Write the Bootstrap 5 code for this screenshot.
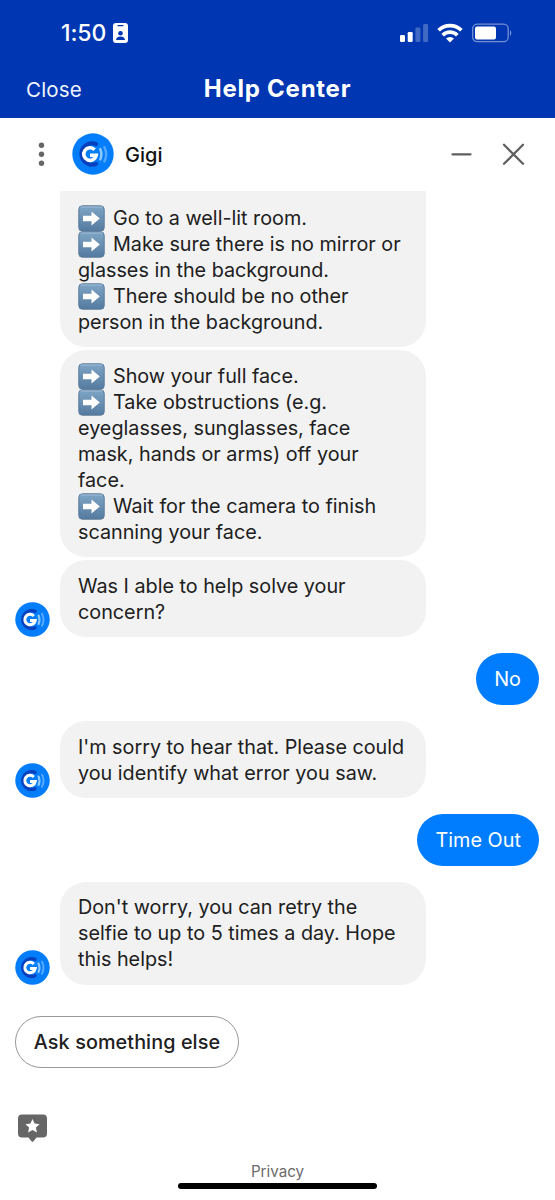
<!DOCTYPE html>
<html lang="en">
<head>
<meta charset="utf-8">
<meta name="viewport" content="width=device-width, initial-scale=1">
<title>Help Center</title>
<link rel="stylesheet" href="https://cdn.jsdelivr.net/npm/bootstrap@5.3.0/dist/css/bootstrap.min.css">
<style>
body{font-family:Inter,"Liberation Sans",sans-serif;color:#202020;background:#fff;font-size:19.78px;line-height:26px}
.screen{width:555px;height:1200px}
.top-bar{height:118px;background:#0036b1}
.status{height:66px;padding:0 42px 0 61px}
.clock{font-size:23px;font-weight:500;letter-spacing:-.1px}
.id-card{margin-left:7px}
.title-row{display:grid;grid-template-columns:1fr auto 1fr;padding:11px 26px 0}
.close-link{font-size:20.5px;letter-spacing:.2px;color:#f0f4ff}
.page-title{font-size:24px;font-weight:700;letter-spacing:.75px}
.bot-bar{height:73px;padding:0 30px 0 38px}
.bot-logo{margin:0 0 2px 26px}
.bot-name{font-size:20px;font-weight:500;color:#111;padding-left:3px}
.bot-row{padding-left:15px;gap:10px}
.messages{gap:3px}
.face{width:35px;height:35px;flex:none}
.bubble{width:366px;background:#f2f2f2;border-radius:26px;padding:12.75px 18px 12.25px}
.bubble.clipped{border-radius:0 0 26px 26px;padding-top:13.500px;height:156px}
.bubble span,.reply span{display:block;white-space:nowrap}
.arrow{width:27px;height:27px;margin:-1px 8px -1px 0;vertical-align:-6px}
.reply{background:#007dfe;height:52px;border-radius:26px;padding:0 18px;margin:16px 16px 15.750px 0;letter-spacing:.04px}
.quick{width:224px;height:52px;border:1px solid #999;border-radius:26px;margin:31px 0 0 15px;font-weight:500;color:#202020;background:#fff;letter-spacing:.1px}
.rate{margin:46px 0 0 18px}
.privacy{font-size:15.200px;line-height:20px;color:#6b6b6b;margin-top:19px}
.home-bar{width:199px;height:6px;border-radius:3px;background:#000;margin-top:1px}
</style>
<script src="https://cdn.jsdelivr.net/npm/bootstrap@5.3.0/dist/js/bootstrap.bundle.min.js"></script>
</head>
<body>
<svg width="0" height="0" class="position-absolute" aria-hidden="true">
<defs>
<linearGradient id="tile" x2="0" y2="1"><stop stop-color="#7fa5c6"/><stop offset="1" stop-color="#547a9f"/></linearGradient>
<symbol id="arrow" viewBox="0 0 27 27"><rect x=".8" y=".8" width="25.4" height="25.4" rx="3.5" fill="url(#tile)" stroke="#5c7a99"/><path d="M2.500 2h22" stroke="#a9c4da" stroke-width=".8"/><path d="M5 10.800h8.500V6.500l8.300 7-8.300 7v-4.300H5z" fill="#fff"/></symbol>
<symbol id="gigi" viewBox="0 0 42 42"><circle cx="21" cy="21" r="20.700" fill="#047dfb"/><path d="M24 11.200A10.600 10.600 0 1 0 24 30.800" fill="none" stroke="#0640be" stroke-width="4" stroke-linecap="round"/><path d="M22.600 16.700a6.300 6.300 0 1 0 1.600 5.600H18" fill="none" stroke="#fff" stroke-width="3.600"/><path d="M28.300 16.200q2.200 5.200 0 10.200" fill="none" stroke="#8cc6ff" stroke-width="2.600" stroke-linecap="round"/><path d="M32.400 14.200q3.600 7 0 14.200" fill="none" stroke="#55a8ff" stroke-width="2.500" stroke-linecap="round"/></symbol>
</defs></svg>
<main class="screen d-flex flex-column overflow-hidden">
<header class="top-bar text-white">
<div class="status d-flex align-items-center justify-content-between">
<div class="d-flex align-items-center"><span class="clock">1:50</span>
<svg class="id-card" width="15" height="20" viewBox="0 0 15 20"><rect width="15" height="20" rx="3" fill="#fff"/><path d="M5 2.600h5" stroke="#0036b1" stroke-width="1.400" stroke-linecap="round"/><circle cx="7.500" cy="10.300" r="2.300" fill="#0036b1"/><path d="M3 17c.3-2.500 2-3.500 4.500-3.500s4.200 1 4.500 3.500z" fill="#0036b1"/></svg></div>
<div class="d-flex align-items-center">
<svg width="29" height="20" viewBox="0 0 29 20"><g fill="#fff"><rect y="12" width="5" height="7" rx="1.300"/><rect x="7.700" y="9" width="5" height="10" rx="1.300"/><g opacity=".25"><rect x="15.400" y="4.500" width="5" height="14.500" rx="1.300"/><rect x="23.100" y="1" width="5" height="18" rx="1.300"/></g></g></svg>
<svg class="ms-2" width="26" height="20" viewBox="0 0 26 20"><g fill="none" stroke="#fff" stroke-width="3.700"><path d="M1.600 7.300a16.200 16.200 0 0 1 22.800 0"/><path d="M5.700 12.200a10.300 10.300 0 0 1 14.600 0"/></g><path d="M9 15.600a5.700 5.700 0 0 1 8 0l-4 4z" fill="#fff"/></svg>
<svg class="ms-2" width="42" height="20" viewBox="0 0 42 20"><rect x="1.700" y="1.200" width="35.500" height="17.500" rx="4.500" fill="none" stroke="#fff" stroke-opacity=".45" stroke-width="1.300"/><rect x="4" y="3.500" width="21" height="13" rx="2" fill="#fff"/><path d="M39 7q2.500 3 0 6z" fill="#fff" opacity=".5"/></svg>
</div></div>
<div class="title-row"><span class="close-link">Close</span><h1 class="page-title mb-0 lh-1">Help Center</h1></div>
</header>
<section class="bot-bar d-flex align-items-center">
<svg width="8" height="26" viewBox="0 0 8 26" fill="#666"><circle cx="3.500" cy="3.200" r="2.700"/><circle cx="3.500" cy="12.200" r="2.700"/><circle cx="3.500" cy="21.200" r="2.700"/></svg>
<svg class="bot-logo" width="42" height="42"><use href="#gigi"/></svg>
<span class="bot-name ms-2">Gigi</span>
<svg class="ms-auto" width="75" height="24" viewBox="0 0 75 24" fill="none" stroke="#606060" stroke-width="2.300" stroke-linecap="round"><path d="M2.500 11.300h18M54 1.800l19 19m0-19l-19 19"/></svg>
</section>
<section class="messages d-flex flex-column">
<div class="bot-row d-flex"><i class="face"></i><div class="bubble clipped"><span><svg class="arrow"><use href="#arrow"/></svg>Go to a well-lit room.</span><span><svg class="arrow"><use href="#arrow"/></svg>Make sure there is no mirror or</span><span>glasses in the background.</span><span><svg class="arrow"><use href="#arrow"/></svg>There should be no other</span><span>person in the background.</span></div></div>
<div class="bot-row d-flex"><i class="face"></i><div class="bubble"><span><svg class="arrow"><use href="#arrow"/></svg>Show your full face.</span><span><svg class="arrow"><use href="#arrow"/></svg>Take obstructions (e.g.</span><span>eyeglasses, sunglasses, face</span><span>mask, hands or arms) off your</span><span>face.</span><span><svg class="arrow"><use href="#arrow"/></svg>Wait for the camera to finish</span><span>scanning your face.</span></div></div>
<div class="bot-row d-flex align-items-end"><svg class="face"><use href="#gigi"/></svg><div class="bubble"><span>Was I able to help solve your</span><span>concern?</span></div></div>
</section>
<div class="reply text-white align-self-end d-flex align-items-center"><span>No</span></div>
<div class="bot-row d-flex align-items-end"><svg class="face"><use href="#gigi"/></svg><div class="bubble"><span>I'm sorry to hear that. Please could</span><span>you identify what error you saw.</span></div></div>
<div class="reply text-white align-self-end d-flex align-items-center"><span>Time Out</span></div>
<div class="bot-row d-flex align-items-end"><svg class="face"><use href="#gigi"/></svg><div class="bubble"><span>Don't worry, you can retry the</span><span>selfie to up to 5 times a day. Hope</span><span>this helps!</span></div></div>
<button class="quick p-0">Ask something else</button>
<svg class="rate" width="30" height="29" viewBox="0 0 30 29"><path d="M4 .5h21a4 4 0 0 1 4 4v15a4 4 0 0 1-4 4h-6.500l-3 3.700q-1 1.200-2 0l-3-3.700H4a4 4 0 0 1-4-4v-15a4 4 0 0 1 4-4z" fill="#666"/><path d="M14.500 5l2.100 4.600 5 .6-3.700 3.400 1 5-4.400-2.500-4.400 2.500 1-5-3.700-3.400 5-.6z" fill="#fff"/></svg>
<a class="privacy align-self-center text-decoration-none">Privacy</a>
<div class="home-bar align-self-center"></div>
</main>
</body>
</html>
